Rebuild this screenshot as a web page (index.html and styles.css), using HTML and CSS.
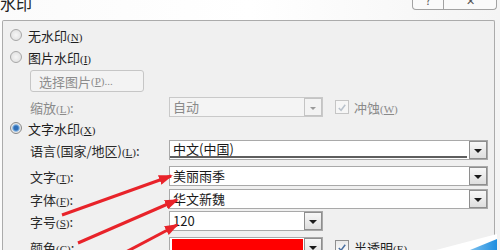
FILE: index.html
```html
<!DOCTYPE html>
<html lang="zh-CN">
<head>
<meta charset="utf-8">
<title>水印</title>
<link rel="stylesheet" href="styles.css">
</head>
<body>
<div class="page">
  <div class="titlebar">
    <div class="title">水印</div>
    <div class="caption-btns">
      <div class="cap-btn help"><span class="cap-glyph">?</span></div>
      <div class="cap-btn close"><span class="cap-glyph">✕</span></div>
    </div>
  </div>
  <div class="panel">
    <div class="row radio-row first">
      <span class="radio"></span>
      <span class="txt">无水印<span class="acc">(<u>N</u>)</span></span>
    </div>
    <div class="row radio-row">
      <span class="radio"></span>
      <span class="txt">图片水印<span class="acc">(<u>I</u>)</span></span>
    </div>
    <div class="row indent btn-row">
      <span class="push-btn">选择图片<span class="acc">(<u>P</u>)...</span></span>
    </div>
    <div class="row indent scale-row disabled">
      <span class="label">缩放<span class="acc">(<u>L</u>)</span>:</span>
      <span class="combo short off"><span class="val">自动</span><span class="drop"><span class="tri"></span></span></span>
      <span class="check off"><svg viewBox="0 0 13 13" width="13" height="13"><path d="M3 7 L5.5 9.5 L10 3.5" fill="none" stroke="#b9c2cc" stroke-width="1.6"/></svg></span>
      <span class="check-txt">冲蚀<span class="acc">(<u>W</u>)</span></span>
    </div>
    <div class="row radio-row">
      <span class="radio on"></span>
      <span class="txt">文字水印<span class="acc">(<u>X</u>)</span></span>
    </div>
    <div class="row indent lang-row">
      <span class="label">语言(国家/地区)<span class="acc">(<u>L</u>)</span>:</span>
      <span class="combo wide focus"><span class="val">中文(中国)</span><span class="drop"><span class="tri"></span></span></span>
    </div>
    <div class="row indent text-row">
      <span class="label">文字<span class="acc">(<u>T</u>)</span>:</span>
      <span class="combo wide"><span class="val">美丽雨季</span><span class="drop"><span class="tri"></span></span></span>
    </div>
    <div class="row indent font-row">
      <span class="label">字体<span class="acc">(<u>F</u>)</span>:</span>
      <span class="combo wide"><span class="val">华文新魏</span><span class="drop"><span class="tri"></span></span></span>
    </div>
    <div class="row indent size-row">
      <span class="label">字号<span class="acc">(<u>S</u>)</span>:</span>
      <span class="combo short"><span class="val">120</span><span class="drop"><span class="tri"></span></span></span>
    </div>
    <div class="row indent color-row">
      <span class="label">颜色<span class="acc">(<u>C</u>)</span>:</span>
      <span class="combo short color"><span class="swatch"></span><span class="drop"><span class="tri"></span></span></span>
      <span class="check"><svg viewBox="0 0 13 13" width="13" height="13"><path d="M3 7 L5.5 9.5 L10 3.5" fill="none" stroke="#4a6fa0" stroke-width="1.6"/></svg></span>
      <span class="check-txt">半透明<span class="acc">(<u>E</u>)</span></span>
    </div>
  </div>
  <svg class="overlay" viewBox="0 0 500 250" width="500" height="250">
    <defs>
      <marker id="ah" markerUnits="userSpaceOnUse" markerWidth="14" markerHeight="10" refX="12" refY="5" orient="auto">
        <path d="M0,0 L14,5 L0,10 Z" fill="#e8232a"/>
      </marker>
      <linearGradient id="blu" x1="0" y1="0" x2="1" y2="0">
        <stop offset="0" stop-color="#7cc0ee"/>
        <stop offset="1" stop-color="#1e8ee0"/>
      </linearGradient>
    </defs>
    <polygon points="436,250 497,234 497,250" fill="#ffffff"/>
    <polygon points="470,250 497,239 497,250" fill="url(#blu)"/>
    <line x1="62" y1="215" x2="171" y2="176" stroke="#e8232a" stroke-width="3" marker-end="url(#ah)"/>
    <line x1="78" y1="243" x2="177" y2="200" stroke="#e8232a" stroke-width="3" marker-end="url(#ah)"/>
    <line x1="124" y1="253" x2="177" y2="225" stroke="#e8232a" stroke-width="3" marker-end="url(#ah)"/>
  </svg>
</div>
</body>
</html>
```

FILE: styles.css
```css
html, body {
  margin: 0;
  padding: 0;
}
body {
  width: 500px;
  height: 250px;
  overflow: hidden;
  background: #f9f9f9;
  font-family: "Noto Sans CJK SC", "Noto Sans", sans-serif;
  font-size: 13px;
  color: #1e1e1e;
}
.page {
  position: relative;
  width: 500px;
  height: 250px;
  overflow: hidden;
  background: linear-gradient(90deg, #fbfbfb 0%, #ffffff 50%, #f4f4f4 100%);
}
.titlebar {
  height: 20px;
  display: flex;
  justify-content: space-between;
  align-items: flex-start;
}
.title {
  font-size: 16px;
  line-height: 16px;
  margin-top: -5px;
  margin-left: 0;
  color: #222;
}
.caption-btns {
  display: flex;
  margin-right: 3px;
  margin-top: -2px;
}
.cap-btn {
  height: 11px;
  border: 1px solid #a2a2a2;
  border-top: none;
  background: #fafafa;
  display: flex;
  justify-content: center;
  align-items: flex-end;
  overflow: hidden;
}
.cap-btn.help {
  width: 30px;
  border-radius: 0 0 0 4px;
}
.cap-btn.close {
  width: 52px;
  border-left: none;
  border-radius: 0 0 4px 0;
}
.cap-glyph {
  font-size: 11px;
  line-height: 11px;
  color: #555;
  margin-bottom: 3px;
}
.panel {
  margin-left: 2px;
  width: 493px;
  height: 240px;
  border: 1px solid #ababab;
  border-bottom: none;
  border-radius: 2px 2px 0 0;
  background: #f0f0f0;
  padding-top: 3px;
  box-sizing: border-box;
}
.row {
  display: flex;
  align-items: center;
  height: 22px;
  white-space: nowrap;
}
.radio-row {
  padding-left: 7px;
}
.radio {
  width: 12px;
  height: 12px;
  box-sizing: border-box;
  border-radius: 50%;
  border: 1px solid #a7a7a7;
  background: radial-gradient(circle at 50% 50%, #f6f6f6 0%, #dcdcdc 100%);
  margin-right: 6px;
  position: relative;
}
.radio.on {
  border-color: #8a8a8a;
  background: radial-gradient(circle at 50% 50%, #2f6fb8 0%, #2f6fb8 28%, #7aaee0 45%, #e8e8e8 60%, #d8d8d8 100%);
}
.txt {
  color: #1e1e1e;
}
.acc {
  font-size: 11px;
  letter-spacing: 0;
  color: inherit;
  font-family: "Liberation Serif", serif;
}
.acc u {
  text-underline-offset: 1px;
}
.indent {
  padding-left: 27px;
}
.btn-row {
  margin-top: 2px;
}
.push-btn {
  width: 114px;
  height: 22px;
  box-sizing: border-box;
  border: 1px solid #c6c6c6;
  border-radius: 3px;
  background: #f3f3f3;
  color: #8d8d8d;
  display: flex;
  align-items: center;
  padding-left: 8px;
}
.label {
  width: 139px;
  flex: none;
  color: #2a2a2a;
}
.disabled .label,
.disabled .check-txt {
  color: #8a8a8a;
}
.scale-row {
  margin-top: 5px;
  height: 20px;
}
.lang-row {
  margin-top: 1px;
  height: 20px;
}
.text-row {
  margin-top: 6px;
  height: 20px;
}
.font-row {
  margin-top: 3px;
  height: 20px;
}
.size-row {
  margin-top: 2px;
  height: 20px;
}
.color-row {
  margin-top: 6px;
  height: 20px;
}
.combo {
  height: 20px;
  box-sizing: border-box;
  border: 1px solid #a9a9a9;
  background: #ffffff;
  display: flex;
  align-items: center;
  justify-content: space-between;
  position: relative;
  flex: none;
}
.combo.wide {
  width: 319px;
}
.combo.short {
  width: 154px;
}
.combo.off {
  border-color: #c9c9c9;
  background: #f4f4f4;
}
.combo.off .val {
  color: #8a8a8a;
}
.combo.focus {
  box-shadow: inset 0 -3px 0 -1px #ffffff;
}
.combo.focus .val {
  border-bottom: 2px solid #5e5e5e;
  align-self: stretch;
  flex: 1;
  display: flex;
  align-items: center;
  margin-right: 2px;
  margin-bottom: 1px;
}
.val {
  padding-left: 3px;
  color: #1a1a1a;
  line-height: 18px;
}
.drop {
  width: 18px;
  height: 18px;
  box-sizing: border-box;
  border: 1px solid #8e8e8e;
  background: linear-gradient(#f7f7f7, #dedede);
  display: flex;
  align-items: center;
  justify-content: center;
  flex: none;
}
.combo.off .drop {
  border-color: #c4c4c4;
  background: #f3f3f3;
}
.tri {
  width: 0;
  height: 0;
  border-left: 4px solid transparent;
  border-right: 4px solid transparent;
  border-top: 4px solid #1a1a1a;
  margin-top: 2px;
}
.combo.off .tri {
  border-top-color: #9a9a9a;
  border-left-width: 3px;
  border-right-width: 3px;
  border-top-width: 3px;
}
.combo.color {
  padding-left: 2px;
  align-items: flex-start;
}
.swatch {
  flex: 1;
  height: 16px;
  margin-top: 1px;
  margin-right: 1px;
  background: #ff0000;
}
.check {
  width: 14px;
  height: 14px;
  box-sizing: border-box;
  border: 1px solid #8f8f8f;
  background: linear-gradient(#e9e9e9, #ffffff);
  margin-left: 12px;
  margin-right: 5px;
  display: flex;
  align-items: center;
  justify-content: center;
  flex: none;
}
.check svg {
  display: block;
}
.check.off {
  border-color: #c5c5c5;
  background: #f6f6f6;
}
.check-txt {
  color: #1e1e1e;
}
.overlay {
  position: absolute;
  left: 0;
  top: 0;
  pointer-events: none;
}
```
